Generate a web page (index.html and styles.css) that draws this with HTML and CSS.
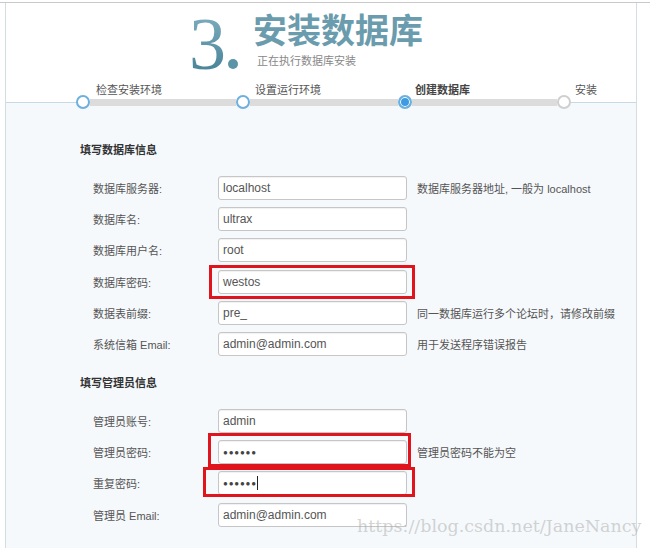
FILE: index.html
```html
<!DOCTYPE html>
<html lang="zh">
<head>
<meta charset="utf-8">
<title>安装数据库</title>
<link rel="stylesheet" href="styles.css">
</head>
<body>
<div class="topline"></div>
<div class="frame">
  <header class="head">
    <div class="num"><span class="digit">3</span><span class="dot"></span></div>
    <div class="titles">
      <h1 class="title">安装数据库</h1>
      <p class="subtitle">正在执行数据库安装</p>
    </div>
  </header>
  <div class="step-labels">
    <span class="slabel s1">检查安装环境</span>
    <span class="slabel s2">设置运行环境</span>
    <span class="slabel s3 current">创建数据库</span>
    <span class="slabel s4">安装</span>
  </div>
  <div class="track">
    <span class="node done"></span><span class="seg g1"></span>
    <span class="node done"></span><span class="seg g2"></span>
    <span class="node active"></span><span class="seg g3"></span>
    <span class="node todo"></span>
  </div>
  <main class="body">
    <h2 class="section">填写数据库信息</h2>
    <div class="rows">
      <div class="row"><span class="lbl">数据库服务器:</span><span class="field"><span class="inp">localhost</span></span><span class="hint">数据库服务器地址, 一般为 localhost</span></div>
      <div class="row"><span class="lbl">数据库名:</span><span class="field"><span class="inp">ultrax</span></span></div>
      <div class="row"><span class="lbl">数据库用户名:</span><span class="field"><span class="inp">root</span></span></div>
      <div class="row"><span class="lbl">数据库密码:</span><span class="field"><span class="inp">westos</span><span class="mark m1"></span></span></div>
      <div class="row"><span class="lbl">数据表前缀:</span><span class="field"><span class="inp">pre_</span></span><span class="hint">同一数据库运行多个论坛时，请修改前缀</span></div>
      <div class="row"><span class="lbl">系统信箱 Email:</span><span class="field"><span class="inp">admin@admin.com</span></span><span class="hint">用于发送程序错误报告</span></div>
    </div>
    <h2 class="section sec2">填写管理员信息</h2>
    <div class="rows">
      <div class="row"><span class="lbl">管理员账号:</span><span class="field"><span class="inp">admin</span></span></div>
      <div class="row"><span class="lbl">管理员密码:</span><span class="field"><span class="inp pw">●●●●●●</span><span class="mark m2"></span></span><span class="hint">管理员密码不能为空</span></div>
      <div class="row"><span class="lbl">重复密码:</span><span class="field"><span class="inp pw">●●●●●●<span class="caret"></span></span><span class="mark m3"></span></span></div>
      <div class="row"><span class="lbl">管理员 Email:</span><span class="field"><span class="inp">admin@admin.com</span></span></div>
    </div>
  </main>
</div>
<div class="watermark">https://blog.csdn.net/JaneNancy</div>
</body>
</html>
```

FILE: styles.css
```css
html, body {
  margin: 0;
  padding: 0;
  background: #ffffff;
  font-family: "Liberation Sans", "Noto Sans CJK SC", sans-serif;
  color: #555;
  overflow: hidden;
}
body {
  padding-top: 2px;
  position: relative;
  height: 546px;
}
.topline {
  height: 1px;
  background: #c9c9c9;
}
.frame {
  margin-left: 5px;
  width: 630px;
  border-left: 1px solid #d3dde4;
  border-right: 1px solid #d3dde4;
  background: #f5f9fc;
  min-height: 560px;
}
.head {
  background: #fff;
  display: flex;
  align-items: flex-start;
  padding-left: 183px;
  height: 78px;
}
.num {
  display: flex;
  align-items: flex-end;
  width: 64px;
  height: 68px;
}
.digit {
  font-family: "Liberation Serif", serif;
  font-size: 74px;
  line-height: 86px;
  color: #5a93a6;
  background: linear-gradient(180deg, #7aaabb 20%, #4a8599 80%);
  -webkit-background-clip: text;
  background-clip: text;
  -webkit-text-fill-color: transparent;
  margin-bottom: -16px;
}
.dot {
  width: 10px;
  height: 10px;
  border-radius: 50%;
  background: #5d95a8;
  margin-left: 2px;
  margin-bottom: 2px;
}
.titles {
  padding-top: 8px;
}
.title {
  margin: 0;
  font-size: 34px;
  line-height: 40px;
  font-weight: bold;
  color: #6b9cad;
}
.subtitle {
  margin: 3px 0 0 4px;
  font-size: 11px;
  line-height: 14px;
  color: #888;
}
.step-labels {
  background: #fff;
  display: flex;
  padding-left: 90px;
  padding-top: 2px;
  height: 14px;
  font-size: 11px;
  line-height: 14px;
  color: #555;
}
.slabel {
  flex: none;
}
.s1 { width: 159px; }
.s2 { width: 160px; }
.s3 { width: 160px; }
.slabel.current {
  font-weight: bold;
  color: #444;
}
.track {
  display: flex;
  align-items: center;
  height: 10px;
  padding-left: 70px;
  background: linear-gradient(180deg, #fff 0, #fff 5px, #c6d9e5 5px, #c6d9e5 6px, #f5f9fc 6px);
}
.node {
  box-sizing: border-box;
  width: 14px;
  height: 14px;
  border-radius: 50%;
  border: 2px solid #6db0dd;
  background: #fff;
  flex: none;
}
.node.active {
  background: #3d9be4;
  box-shadow: inset 0 0 0 1px #fff;
}
.node.todo {
  border-color: #cfcfcf;
}
.seg {
  flex: none;
  height: 7px;
  background: #dcdcdc;
}
.g1 { width: 146px; }
.g2 { width: 148px; }
.g3 { width: 145px; }
.body {
  padding: 35px 0 40px 74px;
}
.section {
  margin: 0;
  font-size: 11px;
  line-height: 16px;
  font-weight: bold;
  color: #333;
}
.sec2 {
  margin-top: 19px;
}
.rows {
  display: flex;
  flex-direction: column;
  gap: 7.2px;
  padding-top: 18px;
  padding-left: 13px;
}
.row {
  display: flex;
  align-items: center;
  height: 24px;
  font-size: 11px;
}
.lbl {
  width: 125px;
  color: #555;
}
.field {
  position: relative;
  width: 189px;
  height: 24px;
}
.inp {
  display: flex;
  align-items: center;
  box-sizing: border-box;
  width: 189px;
  height: 24px;
  padding-left: 4px;
  border: 1px solid #c6c6c6;
  border-radius: 3px;
  background: #fff;
  box-shadow: inset 0 1px 1px rgba(0,0,0,0.06);
  font-size: 12px;
  color: #555;
}
.inp.pw {
  font-size: 8px;
  letter-spacing: 0.8px;
  color: #444;
}
.caret {
  display: inline-block;
  width: 1px;
  height: 14px;
  background: #222;
}
.hint {
  margin-left: 10px;
  color: #555;
}
.mark {
  position: absolute;
  border: 3px solid #e0141c;
  pointer-events: none;
}
.m1 { left: -9px; right: -8px; top: -5px; bottom: -5px; }
.m2 { left: -10px; right: -4px; top: -7px; bottom: -3px; }
.m3 { left: -15px; right: -8px; top: -4px; bottom: -2px; }
.watermark {
  position: absolute;
  left: 357px;
  top: 516px;
  font-family: "DejaVu Serif", serif;
  font-size: 17.5px;
  color: rgba(170, 170, 170, 0.5);
  white-space: nowrap;
}
```
